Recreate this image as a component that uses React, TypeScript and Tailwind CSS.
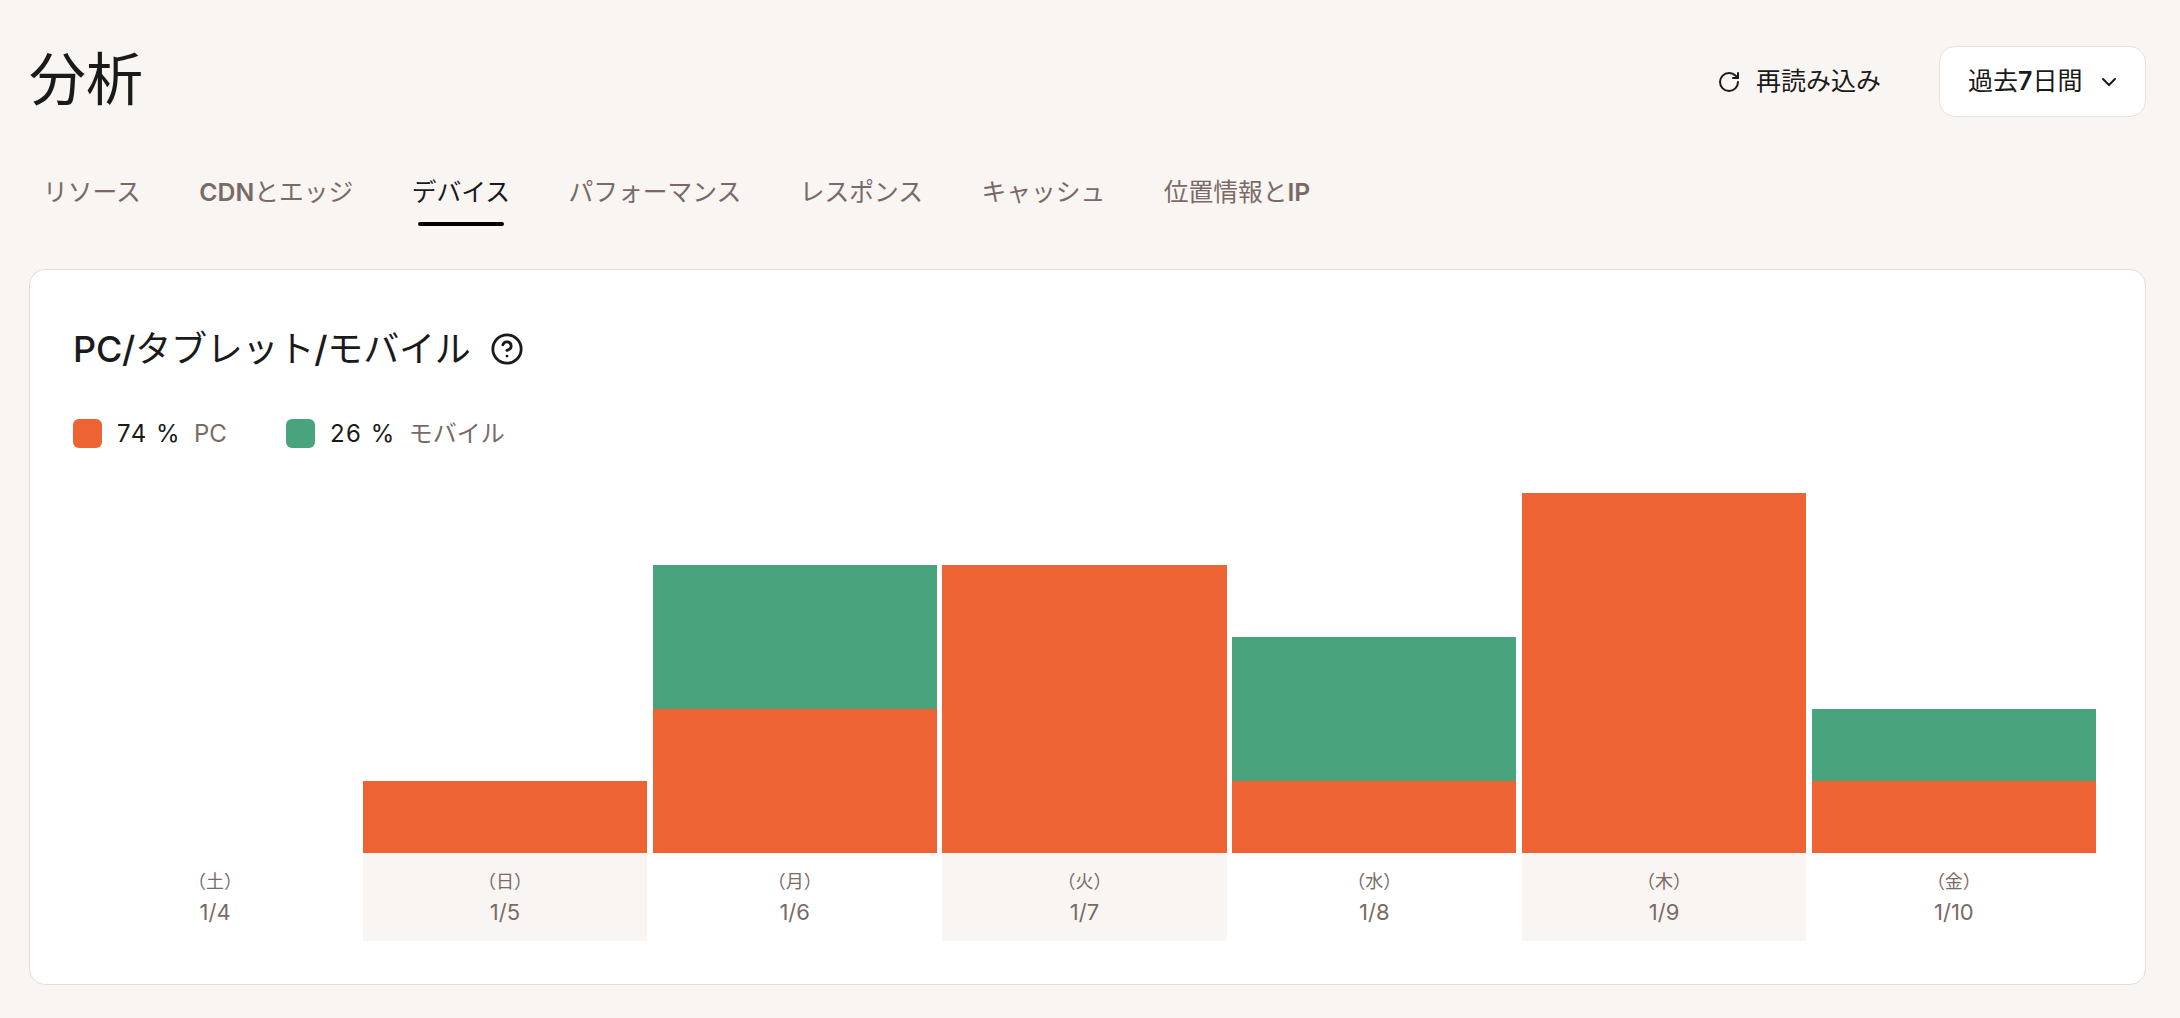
import { RotateCw, ChevronDown, CircleHelp } from "lucide-react";

const UNIT = 72;
const days = [
  { d: "（土）", t: "1/4", o: 0, g: 0 },
  { d: "（日）", t: "1/5", o: 1, g: 0 },
  { d: "（月）", t: "1/6", o: 2, g: 2 },
  { d: "（火）", t: "1/7", o: 4, g: 0 },
  { d: "（水）", t: "1/8", o: 1, g: 2 },
  { d: "（木）", t: "1/9", o: 5, g: 0 },
  { d: "（金）", t: "1/10", o: 1, g: 1 },
];

const tabs: { label: React.ReactNode; active?: boolean }[] = [
  { label: "リソース" },
  { label: <><span className="font-semibold">CDN</span>とエッジ</> },
  { label: "デバイス", active: true },
  { label: "パフォーマンス" },
  { label: "レスポンス" },
  { label: "キャッシュ" },
  { label: <>位置情報と<span className="font-semibold">IP</span></> },
];

export default function App() {
  return (
    <div className="min-h-[1018px] bg-[#f8f5f2] pl-[29px] pr-[34px] pt-[46px] text-[#1a1a1a] font-['Inter','Noto_Sans_CJK_JP',sans-serif]">
      <header className="flex h-[71px] items-center justify-between">
        <h1 className="mb-[4px] text-[57px] leading-none font-normal">分析</h1>
        <div className="flex items-center">
          <button className="flex items-center gap-[15px] text-[25px] leading-none">
            <RotateCw className="size-[24px]" strokeWidth={2} />
            <span>再読み込み</span>
          </button>
          <button className="ml-[58px] flex h-[71px] w-[207px] items-center rounded-2xl border border-[#e9e1db] bg-white pl-[28px] text-[25px] leading-none">
            <span>過去<span className="font-semibold">7</span>日間</span>
            <ChevronDown className="ml-[15px] size-[24px]" strokeWidth={2} />
          </button>
        </div>
      </header>

      <nav className="mt-[57px] flex gap-[58.5px] pl-[14px] text-[24.75px] leading-[36px] text-[#7a6a66]">
        {tabs.map((t, i) => (
          <div key={i} className="flex flex-col items-center">
            <span className={t.active ? "text-[#1a1a1a]" : ""}>{t.label}</span>
            <span className={t.active ? "mt-3 h-1 w-[86px] rounded-full bg-black" : "mt-3 h-1"} />
          </div>
        ))}
      </nav>

      <section className="mt-[43px] h-[716px] rounded-2xl border border-[#e6ddd7] bg-white pl-[43px] pr-[49px] pt-[57px]">
        <div className="flex h-[44px] items-center text-[36px] leading-none">
          <h2 className="font-normal tracking-[-0.2px]"><span className="font-medium">PC/</span>タブレット<span className="font-medium">/</span>モバイル</h2>
          <CircleHelp className="ml-[19px] size-[34px]" strokeWidth={2} />
        </div>

        <div className="mt-[48px] flex h-[29px] items-center text-[24px] leading-none">
          <span className="size-[29px] rounded-md bg-[#ee6334]" />
          <span className="ml-[15px] tracking-[1.5px]">74 %</span>
          <span className="ml-[13px] text-[#7a6a66]">PC</span>
          <span className="ml-[59px] size-[29px] rounded-md bg-[#49a47d]" />
          <span className="ml-[15px] tracking-[1.5px]">26 %</span>
          <span className="ml-[13px] text-[#7a6a66]">モバイル</span>
        </div>

        <div className="mt-[44px] grid grid-cols-7 gap-x-[5.6px]">
          {days.map((c, i) => (
            <div key={c.t} className="flex flex-col">
              <div className="flex h-[361px] flex-col justify-end">
                {c.g > 0 && <div className="bg-[#49a47d]" style={{ height: c.g * UNIT }} />}
                {c.o > 0 && <div className="bg-[#ee6334]" style={{ height: c.o * UNIT }} />}
              </div>
              <div className={`flex h-[88px] flex-col items-center pt-[16px] text-[#7a6a66] ${i % 2 === 1 ? "bg-[#f8f5f2]" : ""}`}>
                <span className="text-[18px] leading-[26px]">{c.d}</span>
                <span className="mt-[3px] text-[22px] leading-[28px]">{c.t}</span>
              </div>
            </div>
          ))}
        </div>
      </section>
    </div>
  );
}
